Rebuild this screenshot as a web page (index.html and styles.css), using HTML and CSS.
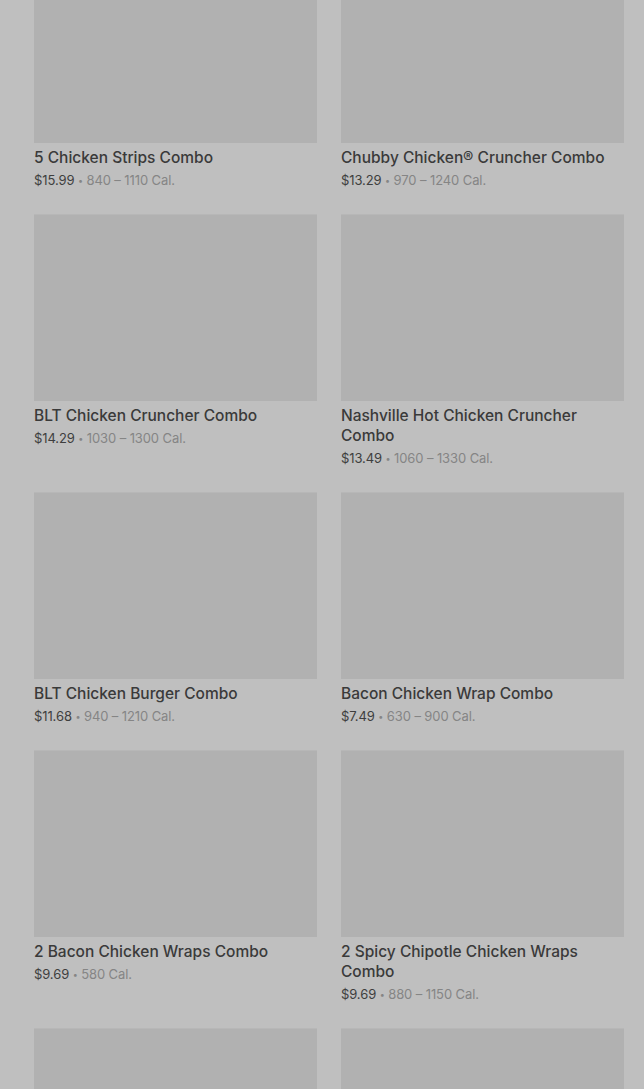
FILE: index.html
```html
<!DOCTYPE html>
<html lang="en">
<head>
  <meta charset="UTF-8">
  <title>Combos</title>
  <link rel="stylesheet" href="styles.css">
</head>
<body>

<div class="menu">
  <div class="item">
    <div class="photo"></div>
    <div class="name">5 Chicken Strips Combo</div>
    <div class="meta"><span class="price">$15.99</span> <span class="dot">•</span> 840 – 1110 Cal.</div>
  </div>
  <div class="item">
    <div class="photo"></div>
    <div class="name">Chubby Chicken® Cruncher Combo</div>
    <div class="meta"><span class="price">$13.29</span> <span class="dot">•</span> 970 – 1240 Cal.</div>
  </div>

  <div class="item">
    <div class="photo"></div>
    <div class="name">BLT Chicken Cruncher Combo</div>
    <div class="meta"><span class="price">$14.29</span> <span class="dot">•</span> 1030 – 1300 Cal.</div>
  </div>
  <div class="item">
    <div class="photo"></div>
    <div class="name">Nashville Hot Chicken Cruncher Combo</div>
    <div class="meta"><span class="price">$13.49</span> <span class="dot">•</span> 1060 – 1330 Cal.</div>
  </div>

  <div class="item">
    <div class="photo"></div>
    <div class="name">BLT Chicken Burger Combo</div>
    <div class="meta"><span class="price">$11.68</span> <span class="dot">•</span> 940 – 1210 Cal.</div>
  </div>
  <div class="item">
    <div class="photo"></div>
    <div class="name">Bacon Chicken Wrap Combo</div>
    <div class="meta"><span class="price">$7.49</span> <span class="dot">•</span> 630 – 900 Cal.</div>
  </div>

  <div class="item">
    <div class="photo"></div>
    <div class="name">2 Bacon Chicken Wraps Combo</div>
    <div class="meta"><span class="price">$9.69</span> <span class="dot">•</span> 580 Cal.</div>
  </div>
  <div class="item">
    <div class="photo"></div>
    <div class="name">2 Spicy Chipotle Chicken Wraps Combo</div>
    <div class="meta"><span class="price">$9.69</span> <span class="dot">•</span> 880 – 1150 Cal.</div>
  </div>

  <div class="item">
    <div class="photo"></div>
  </div>
  <div class="item">
    <div class="photo"></div>
  </div>
</div>

</body>
</html>
```

FILE: styles.css
```css
body {
  margin: 0;
  background-color: #bfbfbf;
  font-family: Inter, "Liberation Sans", sans-serif;
  overflow: hidden;
}
/* list is scrolled a bit, first row is cut at the top */
.menu {
  display: grid;
  grid-template-columns: 283px 283px;
  column-gap: 24px;
  row-gap: 25px;
  padding: 0 20px 0 34px;
  margin-top: -44px;
  align-items: start;
}
.item {
  display: flex;
  flex-direction: column;
}
.photo {
  height: 187px;
  background-color: #b1b1b1;
  border-top: 1px solid #b7b7b7;
  box-sizing: border-box;
}
.name {
  margin-top: 5px;
  font-size: 15.5px;
  line-height: 20px;
  font-weight: 500;
  color: #3a3a3a;
}
.meta {
  margin-top: 3px;
  height: 18px;
  font-size: 13px;
  line-height: 18px;
  color: #858585;
  letter-spacing: -0.1px;
}
.price {
  color: #3e3e3e;
}
.dot {
  display: inline-block;
  font-size: 9px;
  line-height: 0;
  vertical-align: 1px;
}
```
